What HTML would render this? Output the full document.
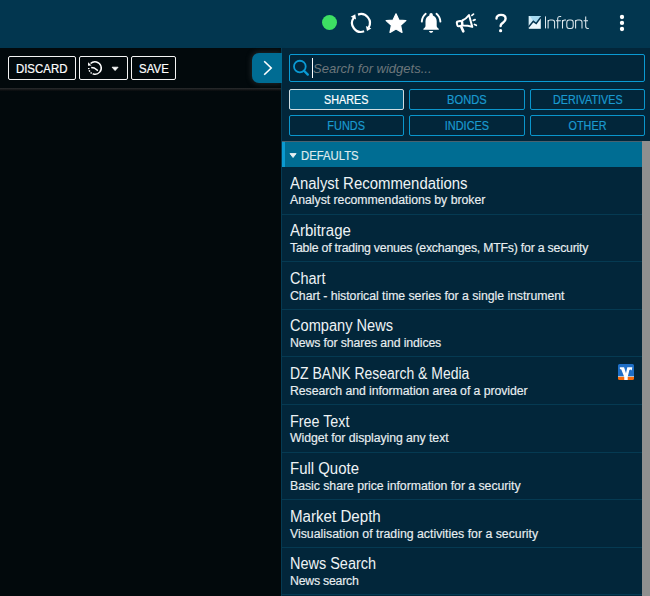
<!DOCTYPE html>
<html><head><meta charset="utf-8">
<style>
*{box-sizing:border-box;margin:0;padding:0}
html,body{width:650px;height:596px;overflow:hidden;background:#02090c;font-family:"Liberation Sans",sans-serif}
#hdr{position:absolute;left:0;top:0;width:650px;height:48px;background:#02364f}
.ico{position:absolute}
#left-line{position:absolute;left:0;top:88px;width:281px;height:3px;background:linear-gradient(#2b2d2f,#141618 60%,#05090b)}
.tbtn{position:absolute;top:56px;height:24px;border:1px solid #f4f4f4;border-radius:2px;color:#fff;font-size:12.3px;line-height:23px;padding-top:1px;text-align:center;background:#02090c;white-space:nowrap}
.tbtn span{display:inline-block;transform-origin:50% 50%;-webkit-text-stroke:0.2px currentColor}
#tab{position:absolute;left:252px;top:53px;width:30px;height:30px;background:#006c93;border-radius:7px 0 0 7px;box-shadow:0 0 6px rgba(120,120,120,.35)}
#panel{position:absolute;left:281px;top:48px;width:369px;height:548px;background:#02263a;border-left:1px solid #053a52}
#search{position:absolute;left:7px;top:6px;width:356px;height:28px;border:1px solid #0a9ad3;border-radius:2px}
#ph{position:absolute;left:23px;top:6.6px;font-style:italic;font-size:13px;color:#6c767b;line-height:14px;white-space:nowrap}
#caret{position:absolute;left:22px;top:3px;width:1px;height:20px;background:#fff}
.fb{position:absolute;height:21px;border:1px solid #0a96cc;border-radius:2px;color:#1a9ad0;font-size:12.3px;line-height:20px;text-align:center;white-space:nowrap}
.fb span{display:inline-block;transform-origin:50% 50%;-webkit-text-stroke:0.2px currentColor}
.fb.act{background:#005e83;border-color:#cfdde2;color:#fff}
#sec{position:absolute;left:0;top:93px;width:360px;height:26px;background:#006d93;border-top:1px solid #4a6270;color:#dfeaee;font-size:12.3px;line-height:26px}
#sec .bar{position:absolute;left:0;top:0;width:3px;height:25px;background:#0b9ad0}
#sec .tri{position:absolute;left:7.6px;top:11px;width:0;height:0;border-left:3.5px solid transparent;border-right:3.5px solid transparent;border-top:5px solid #e6eef1}
#sec span{position:absolute;left:19px;top:1px;-webkit-text-stroke:0.2px currentColor;display:inline-block;transform:scaleX(.92);transform-origin:0 50%}
#sb{position:absolute;left:360px;top:93px;width:8px;height:455px;background:#8f8f8f}
.it{position:absolute;left:0;width:360px;height:47.6px;border-bottom:1px solid #053a52;white-space:nowrap}
.it .t{position:absolute;left:8px;top:7.6px;font-size:16px;line-height:18px;color:#eef3f5;transform-origin:0 50%}
.it .s{position:absolute;left:8px;top:27.4px;font-size:12.3px;line-height:13px;color:#e8eef1;-webkit-text-stroke:0.15px #e8eef1}
</style></head><body>
<div id="hdr">
  <!-- green dot -->
  <div class="ico" style="left:321.7px;top:14.5px;width:15.5px;height:15.5px;border-radius:50%;background:#3ddf63"></div>
  <!-- refresh -->
  <svg class="ico" style="left:347px;top:10px" width="28" height="26" viewBox="0 0 28 26">
    <g fill="none" stroke="#fff" stroke-width="2.2" stroke-linecap="butt">
      <path d="M11.0 4.6 A8.9 8.9 0 0 1 21.6 17.6"/>
      <path d="M17.1 21.3 A8.9 8.9 0 0 1 6.9 7.6"/>
    </g>
    <path fill="#fff" d="M18.9 15.9 L24.4 18.6 L20.0 21.0 Z"/>
    <path fill="#fff" d="M3.7 6.8 L8.3 4.3 L9.0 9.6 Z"/>
  </svg>
  <!-- star -->
  <svg class="ico" style="left:385px;top:12.5px" width="22" height="21" viewBox="0 0 22 21">
    <path fill="#fff" stroke="#fff" stroke-width="1.2" stroke-linejoin="round" d="M11 0.8 L13.9 7 L20.9 7.6 L15.6 12.3 L17 19.4 L11 16 L5 19.4 L6.4 12.3 L1.1 7.6 L8.1 7 Z"/>
  </svg>
  <!-- bell -->
  <svg class="ico" style="left:417px;top:8px" width="28" height="28" viewBox="0 0 28 28">
    <path fill="#fff" d="M14.1 5.0 C15.2 5.0 15.8 5.8 15.9 7.4 C18.4 8.3 19.7 10.5 19.7 13.2 L19.7 18.0 C19.7 19.2 20.8 20.2 21.8 20.8 L21.8 21.8 L6.4 21.8 L6.4 20.8 C7.4 20.2 8.5 19.2 8.5 18.0 L8.5 13.2 C8.5 10.5 9.8 8.3 12.3 7.4 C12.4 5.8 13.0 5.0 14.1 5.0 Z"/>
    <path fill="#fff" d="M12.0 23.0 H16.2 C16.0 24.2 15.2 24.8 14.1 24.8 C13.0 24.8 12.2 24.2 12.0 23.0 Z"/>
    <path fill="none" stroke="#fff" stroke-width="1.9" stroke-linecap="round" d="M8.7 5.8 Q5.2 8.6 4.8 13.6 M19.5 5.8 Q23.0 8.6 23.4 13.6"/>
  </svg>
  <!-- megaphone -->
  <svg class="ico" style="left:452px;top:8px" width="28" height="28" viewBox="0 0 28 28">
    <g fill="none" stroke="#fff" stroke-width="2" stroke-linejoin="round" stroke-linecap="round">
      <rect x="5" y="13.2" width="5" height="4.8" rx="1.4" transform="rotate(-12 7.5 15.6)"/>
      <path d="M10.3 12.5 C12.8 11.4 15.2 9.6 17.0 7.0 L20.3 18.9 C17.2 17.9 13.8 17.4 10.5 17.5 Z"/>
      <path d="M9.3 18.9 L11.3 23.4" stroke-width="2.6"/>
      <path d="M19.9 7.4 L21.5 6.1 M21.3 12.4 L23.1 11.6 M22.5 16.4 L24.3 17.3" stroke-width="1.7"/>
    </g>
  </svg>
  <!-- question -->
  <svg class="ico" style="left:490px;top:10px" width="24" height="26" viewBox="0 0 24 26">
    <path fill="none" stroke="#fff" stroke-width="2.4" stroke-linecap="round" d="M6.5 8.6 C6.5 6.2 8.2 4.9 11.0 4.9 C13.8 4.9 15.6 6.4 15.6 8.8 C15.6 11.2 14.0 12.1 12.6 13.1 C11.2 14.1 10.6 14.8 10.6 16.0"/>
    <circle cx="10.6" cy="20.7" r="1.6" fill="#fff"/>
  </svg>
  <!-- infront logo -->
  <svg class="ico" style="left:527px;top:15px" width="64" height="16" viewBox="0 0 64 16">
    <rect x="1.8" y="1.0" width="12" height="12.8" fill="#eef8fc"/>
    <path d="M1.8 1.0 L2.8 1.0 L6.3 6.3 L1.8 11.7 Z" fill="#d6eff9"/>
    <path d="M2.8 1.0 L13.8 1.0 L13.8 2.1 L9.2 8.5 L6.3 6.3 Z" fill="#a6d9ef"/>
    <path d="M1.6 11.9 L6.3 6.3 L9.2 8.5 L14 2.0" fill="none" stroke="#063550" stroke-width="1.5"/>
    <g fill="none" stroke="#dfe9ee" stroke-width="1.05">
      <path d="M18.5 1.4 V13.4"/>
      <path d="M21.1 13.4 V5 M21.1 7 C21.1 5.6 22 5 23.4 5 H25.3 C26.9 5 27.6 5.8 27.6 7.2 V13.4"/>
      <path d="M30.7 13.4 V3.8 C30.7 2.2 31.5 1.4 33 1.4 H34.2 M29 5.8 H33.8"/>
      <path d="M35.5 13.4 V5 M35.5 7.2 C35.5 5.8 36.4 5 37.8 5 H39"/>
      <path d="M42.1 5 H43.9 C45.5 5 46.2 5.8 46.2 7.4 V11 C46.2 12.6 45.5 13.4 43.9 13.4 H42.1 C40.5 13.4 39.8 12.6 39.8 11 V7.4 C39.8 5.8 40.5 5 42.1 5 Z"/>
      <path d="M48.6 13.4 V5 M48.6 7 C48.6 5.6 49.5 5 50.9 5 H52.7 C54.3 5 55 5.8 55 7.2 V13.4"/>
      <path d="M58.7 1.4 V11.2 C58.7 12.8 59.4 13.4 60.8 13.4 H61.8 M56.6 5.8 H61"/>
    </g>
  </svg>
  <!-- kebab -->
  <svg class="ico" style="left:612px;top:10px" width="20" height="26" viewBox="0 0 20 26">
    <circle cx="10" cy="7" r="2.15" fill="#fff"/>
    <circle cx="10" cy="12.95" r="2.15" fill="#fff"/>
    <circle cx="10" cy="19" r="2.15" fill="#fff"/>
  </svg>
</div>

<div class="tbtn" style="left:8px;width:68px"><span style="transform:scaleX(.93)">DISCARD</span></div>
<div class="tbtn" style="left:79px;width:49px">
  <svg style="position:absolute;left:28px;top:6px" width="12" height="10" viewBox="0 0 12 10"><path d="M4.1 4.2 H10.1 L7.1 7.6 Z" fill="#fff" stroke="#fff" stroke-width="0.8" stroke-linejoin="round"/></svg>
</div>
<svg style="position:absolute;left:82px;top:58px" width="24" height="20" viewBox="0 0 24 20">
  <path d="M8.58 5.58 A6.25 6.25 0 1 1 11.9 16.15" fill="none" stroke="#fff" stroke-width="1.5"/>
  <path d="M11.9 16.15 A6.25 6.25 0 0 1 6.84 8.91" fill="none" stroke="#fff" stroke-width="1.5" stroke-dasharray="1.3 1.1"/>
  <path d="M6.1 4.2 L9.5 7.6 L6.0 7.8 Z" fill="#fff"/>
  <path d="M9.2 9.6 L12.2 10.0 L15.9 12.6" fill="none" stroke="#fff" stroke-width="1.5"/>
</svg>
<div class="tbtn" style="left:131px;width:45px"><span style="transform:scaleX(.93)">SAVE</span></div>
<div id="left-line"></div>

<div id="tab">
  <svg style="position:absolute;left:10px;top:7px" width="12" height="16" viewBox="0 0 12 16">
    <path d="M2.2 1.2 L9.2 8 L2.2 14.8" fill="none" stroke="#fff" stroke-width="1.6"/>
  </svg>
</div>

<div id="panel">
  <div style="position:absolute;left:-1px;top:5px;width:1px;height:30px;background:#006c93"></div>
  <div id="search">
    <svg style="position:absolute;left:1px;top:4px" width="22" height="20" viewBox="0 0 22 20">
      <circle cx="8.85" cy="7.6" r="5.85" fill="none" stroke="#0a9ad3" stroke-width="1.8"/>
      <path d="M13.0 11.7 L16.8 15.6" stroke="#0a9ad3" stroke-width="2.3" stroke-linecap="round"/>
    </svg>
    <div id="caret"></div>
    <div id="ph">Search for widgets...</div>
  </div>
  <div class="fb act" style="left:7px;top:41px;width:115px"><span style="transform:scaleX(.877)">SHARES</span></div>
  <div class="fb" style="left:127px;top:41px;width:116px"><span style="transform:scaleX(.906)">BONDS</span></div>
  <div class="fb" style="left:248px;top:41px;width:115px"><span style="transform:scaleX(.876)">DERIVATIVES</span></div>
  <div class="fb" style="left:7px;top:67px;width:115px"><span style="transform:scaleX(.89)">FUNDS</span></div>
  <div class="fb" style="left:127px;top:67px;width:116px"><span style="transform:scaleX(.89)">INDICES</span></div>
  <div class="fb" style="left:248px;top:67px;width:115px"><span style="transform:scaleX(.88)">OTHER</span></div>

  <div id="sec"><div class="bar"></div><svg style="position:absolute;left:5px;top:8px" width="12" height="10" viewBox="0 0 12 10"><path d="M3.0 3.6 H9.1 L6.05 7.5 Z" fill="#e9f0f3" stroke="#e9f0f3" stroke-width="0.9" stroke-linejoin="round"/></svg><span>DEFAULTS</span></div>
  <div id="sb"></div>
    <div class="it" style="top:119.000px"><div class="t" style="transform:scaleX(0.933)">Analyst Recommendations</div><div class="s" style="letter-spacing:-0.025px">Analyst recommendations by broker</div></div>
    <div class="it" style="top:166.600px"><div class="t" style="transform:scaleX(0.938)">Arbitrage</div><div class="s" style="letter-spacing:-0.215px">Table of trading venues (exchanges, MTFs) for a security</div></div>
    <div class="it" style="top:214.200px"><div class="t" style="transform:scaleX(0.905)">Chart</div><div class="s" style="letter-spacing:-0.045px">Chart - historical time series for a single instrument</div></div>
    <div class="it" style="top:261.800px"><div class="t" style="transform:scaleX(0.912)">Company News</div><div class="s" style="letter-spacing:-0.123px">News for shares and indices</div></div>
    <div class="it" style="top:309.400px"><div class="t" style="transform:scaleX(0.873)">DZ BANK Research &amp; Media</div><div class="s" style="letter-spacing:-0.071px">Research and information area of a provider</div>
      <svg style="position:absolute;left:336px;top:6.9px" width="16" height="16" viewBox="0 0 16 16">
        <path d="M1.5 0 H14.5 A1.5 1.5 0 0 1 16 1.5 V12.1 H0 V1.5 A1.5 1.5 0 0 1 1.5 0 Z" fill="#1f6fc7"/>
        <rect x="0" y="12.1" width="16" height="0.8" fill="#e9eef3"/>
        <path d="M0 12.9 H16 V14.5 A1.5 1.5 0 0 1 14.5 16 H1.5 A1.5 1.5 0 0 1 0 14.5 Z" fill="#f66a0a"/>
        <path d="M1.84 3.25 H6.07 L8.0 9.3 L9.3 3.25 H14.3 L13.7 6.5 L12.6 5.6 L11.4 6.0 L9.7 12.9 V16 H6.27 V12.9 L3.3 5.6 L1.9 4.9 Z" fill="#fff"/>
      </svg></div>
    <div class="it" style="top:357.000px"><div class="t" style="transform:scaleX(0.894)">Free Text</div><div class="s" style="letter-spacing:-0.069px">Widget for displaying any text</div></div>
    <div class="it" style="top:404.600px"><div class="t" style="transform:scaleX(0.934)">Full Quote</div><div class="s" style="letter-spacing:-0.042px">Basic share price information for a security</div></div>
    <div class="it" style="top:452.200px"><div class="t" style="transform:scaleX(0.945)">Market Depth</div><div class="s" style="letter-spacing:0.004px">Visualisation of trading activities for a security</div></div>
    <div class="it" style="top:499.800px"><div class="t" style="transform:scaleX(0.904)">News Search</div><div class="s" style="letter-spacing:-0.22px">News search</div></div>
</div>
</body></html>
